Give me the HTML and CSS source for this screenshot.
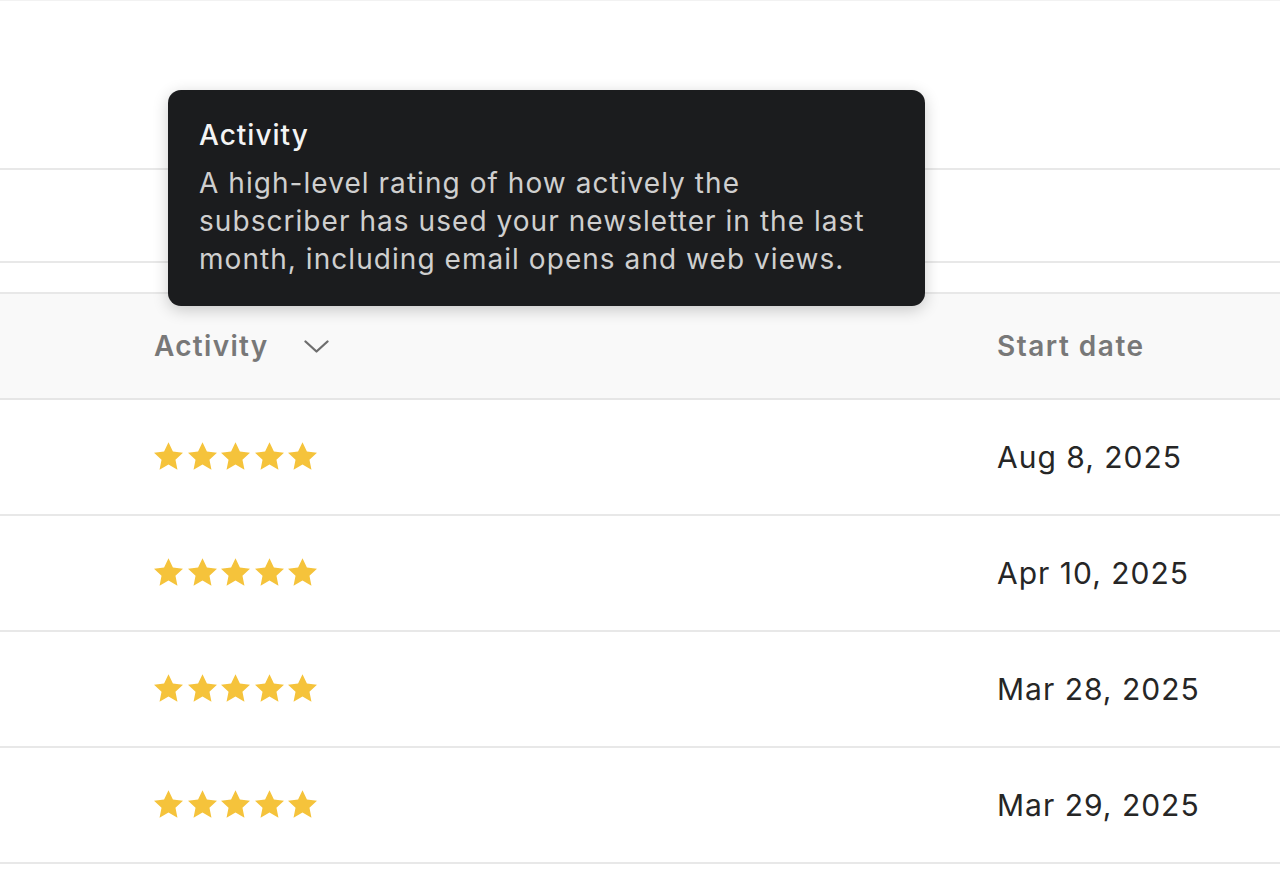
FILE: index.html
```html
<!DOCTYPE html>
<html>
<head>
<meta charset="utf-8">
<link rel="stylesheet" href="styles.css">
</head>
<body>
<div class="page">
  <div class="row-top"></div>
  <div class="row-mid"></div>
  <div class="spacer"></div>
  <div class="table">
    <div class="thead">
      <div class="cell cell-activity head">Activity
        <svg class="chev" width="25" height="15" viewBox="0 0 25 15"><path d="M1.5 2.5 L12.5 12.5 L23.5 2.5" fill="none" stroke="#6e6e6e" stroke-width="2.3" stroke-linecap="round" stroke-linejoin="round"/></svg>
      </div>
      <div class="cell cell-date head">Start date</div>
    </div>
    <div class="trow">
      <div class="cell cell-activity"><div class="stars">
        <svg viewBox="1.8 1.7 20.4 20.4"><path d="M12 1.8l3.1 6.6 7.1.8-5.3 4.9 1.4 7.1L12 17.6l-6.3 3.6 1.4-7.1L1.8 9.2l7.1-.8z"/></svg>
        <svg viewBox="1.8 1.7 20.4 20.4"><path d="M12 1.8l3.1 6.6 7.1.8-5.3 4.9 1.4 7.1L12 17.6l-6.3 3.6 1.4-7.1L1.8 9.2l7.1-.8z"/></svg>
        <svg viewBox="1.8 1.7 20.4 20.4"><path d="M12 1.8l3.1 6.6 7.1.8-5.3 4.9 1.4 7.1L12 17.6l-6.3 3.6 1.4-7.1L1.8 9.2l7.1-.8z"/></svg>
        <svg viewBox="1.8 1.7 20.4 20.4"><path d="M12 1.8l3.1 6.6 7.1.8-5.3 4.9 1.4 7.1L12 17.6l-6.3 3.6 1.4-7.1L1.8 9.2l7.1-.8z"/></svg>
        <svg viewBox="1.8 1.7 20.4 20.4"><path d="M12 1.8l3.1 6.6 7.1.8-5.3 4.9 1.4 7.1L12 17.6l-6.3 3.6 1.4-7.1L1.8 9.2l7.1-.8z"/></svg>
      </div></div>
      <div class="cell cell-date">Aug 8, 2025</div>
    </div>
    <div class="trow">
      <div class="cell cell-activity"><div class="stars">
        <svg viewBox="1.8 1.7 20.4 20.4"><path d="M12 1.8l3.1 6.6 7.1.8-5.3 4.9 1.4 7.1L12 17.6l-6.3 3.6 1.4-7.1L1.8 9.2l7.1-.8z"/></svg>
        <svg viewBox="1.8 1.7 20.4 20.4"><path d="M12 1.8l3.1 6.6 7.1.8-5.3 4.9 1.4 7.1L12 17.6l-6.3 3.6 1.4-7.1L1.8 9.2l7.1-.8z"/></svg>
        <svg viewBox="1.8 1.7 20.4 20.4"><path d="M12 1.8l3.1 6.6 7.1.8-5.3 4.9 1.4 7.1L12 17.6l-6.3 3.6 1.4-7.1L1.8 9.2l7.1-.8z"/></svg>
        <svg viewBox="1.8 1.7 20.4 20.4"><path d="M12 1.8l3.1 6.6 7.1.8-5.3 4.9 1.4 7.1L12 17.6l-6.3 3.6 1.4-7.1L1.8 9.2l7.1-.8z"/></svg>
        <svg viewBox="1.8 1.7 20.4 20.4"><path d="M12 1.8l3.1 6.6 7.1.8-5.3 4.9 1.4 7.1L12 17.6l-6.3 3.6 1.4-7.1L1.8 9.2l7.1-.8z"/></svg>
      </div></div>
      <div class="cell cell-date">Apr 10, 2025</div>
    </div>
    <div class="trow">
      <div class="cell cell-activity"><div class="stars">
        <svg viewBox="1.8 1.7 20.4 20.4"><path d="M12 1.8l3.1 6.6 7.1.8-5.3 4.9 1.4 7.1L12 17.6l-6.3 3.6 1.4-7.1L1.8 9.2l7.1-.8z"/></svg>
        <svg viewBox="1.8 1.7 20.4 20.4"><path d="M12 1.8l3.1 6.6 7.1.8-5.3 4.9 1.4 7.1L12 17.6l-6.3 3.6 1.4-7.1L1.8 9.2l7.1-.8z"/></svg>
        <svg viewBox="1.8 1.7 20.4 20.4"><path d="M12 1.8l3.1 6.6 7.1.8-5.3 4.9 1.4 7.1L12 17.6l-6.3 3.6 1.4-7.1L1.8 9.2l7.1-.8z"/></svg>
        <svg viewBox="1.8 1.7 20.4 20.4"><path d="M12 1.8l3.1 6.6 7.1.8-5.3 4.9 1.4 7.1L12 17.6l-6.3 3.6 1.4-7.1L1.8 9.2l7.1-.8z"/></svg>
        <svg viewBox="1.8 1.7 20.4 20.4"><path d="M12 1.8l3.1 6.6 7.1.8-5.3 4.9 1.4 7.1L12 17.6l-6.3 3.6 1.4-7.1L1.8 9.2l7.1-.8z"/></svg>
      </div></div>
      <div class="cell cell-date">Mar 28, 2025</div>
    </div>
    <div class="trow">
      <div class="cell cell-activity"><div class="stars">
        <svg viewBox="1.8 1.7 20.4 20.4"><path d="M12 1.8l3.1 6.6 7.1.8-5.3 4.9 1.4 7.1L12 17.6l-6.3 3.6 1.4-7.1L1.8 9.2l7.1-.8z"/></svg>
        <svg viewBox="1.8 1.7 20.4 20.4"><path d="M12 1.8l3.1 6.6 7.1.8-5.3 4.9 1.4 7.1L12 17.6l-6.3 3.6 1.4-7.1L1.8 9.2l7.1-.8z"/></svg>
        <svg viewBox="1.8 1.7 20.4 20.4"><path d="M12 1.8l3.1 6.6 7.1.8-5.3 4.9 1.4 7.1L12 17.6l-6.3 3.6 1.4-7.1L1.8 9.2l7.1-.8z"/></svg>
        <svg viewBox="1.8 1.7 20.4 20.4"><path d="M12 1.8l3.1 6.6 7.1.8-5.3 4.9 1.4 7.1L12 17.6l-6.3 3.6 1.4-7.1L1.8 9.2l7.1-.8z"/></svg>
        <svg viewBox="1.8 1.7 20.4 20.4"><path d="M12 1.8l3.1 6.6 7.1.8-5.3 4.9 1.4 7.1L12 17.6l-6.3 3.6 1.4-7.1L1.8 9.2l7.1-.8z"/></svg>
      </div></div>
      <div class="cell cell-date">Mar 29, 2025</div>
    </div>
  </div>

  <div class="tooltip">
    <div class="tooltip-title">Activity</div>
    <div class="tooltip-body">A high-level rating of how actively the<br>subscriber has used your newsletter in the last<br>month, including email opens and web views.</div>
  </div>
</div>
</body>
</html>
```

FILE: styles.css
```css
html, body {
  margin: 0;
  padding: 0;
  background: #ffffff;
}
body {
  font-family: Inter, "Noto Sans", "Liberation Sans", sans-serif;
  width: 1280px;
  height: 890px;
  overflow: hidden;
}
.page {
  position: relative;
  width: 1280px;
  height: 890px;
}
.row-top {
  box-sizing: border-box;
  height: 170px;
  border-top: 1px solid #f2f2f2;
  border-bottom: 2px solid #e8e8e8;
}
.row-mid {
  box-sizing: border-box;
  height: 93px;
  border-bottom: 2px solid #e8e8e8;
}
.spacer {
  height: 29px;
}
.table {
  border-top: 2px solid #e8e8e8;
}
.thead {
  display: grid;
  grid-template-columns: 997px 1fr;
  height: 104px;
  background: #f9f9f9;
  border-bottom: 2px solid #e6e6e6;
  align-items: center;
}
.trow {
  display: grid;
  grid-template-columns: 997px 1fr;
  height: 114px;
  border-bottom: 2px solid #e8e8e8;
  align-items: center;
}
.cell-activity {
  padding-left: 154px;
  display: flex;
  align-items: center;
}
.cell-date {
  font-size: 30px;
  color: #262626;
  letter-spacing: 1px;
}
.cell.head {
  font-size: 28px;
  font-weight: 600;
  color: #787878;
  letter-spacing: 1.5px;
}
.cell.cell-activity.head {
  letter-spacing: 1.3px;
}
.chev {
  margin-left: 35px;
  margin-top: 1px;
}
.stars {
  display: flex;
  gap: 4.5px;
  margin-top: -2px;
}
.stars svg {
  width: 29px;
  height: 29px;
  fill: #f5c33b;
}
.tooltip {
  position: absolute;
  left: 168px;
  top: 90px;
  width: 757px;
  height: 216px;
  box-sizing: border-box;
  padding: 26px 31px 0 31px;
  background: #1b1c1e;
  border-radius: 13px;
  box-shadow: 0 4px 16px rgba(0,0,0,0.2);
}
.tooltip-title {
  font-size: 28px;
  line-height: 38px;
  font-weight: 500;
  color: #f4f4f4;
  letter-spacing: 1px;
}
.tooltip-body {
  margin-top: 10px;
  font-size: 28px;
  line-height: 38px;
  color: #cfcfcf;
  letter-spacing: 1.05px;
  white-space: nowrap;
}
```
